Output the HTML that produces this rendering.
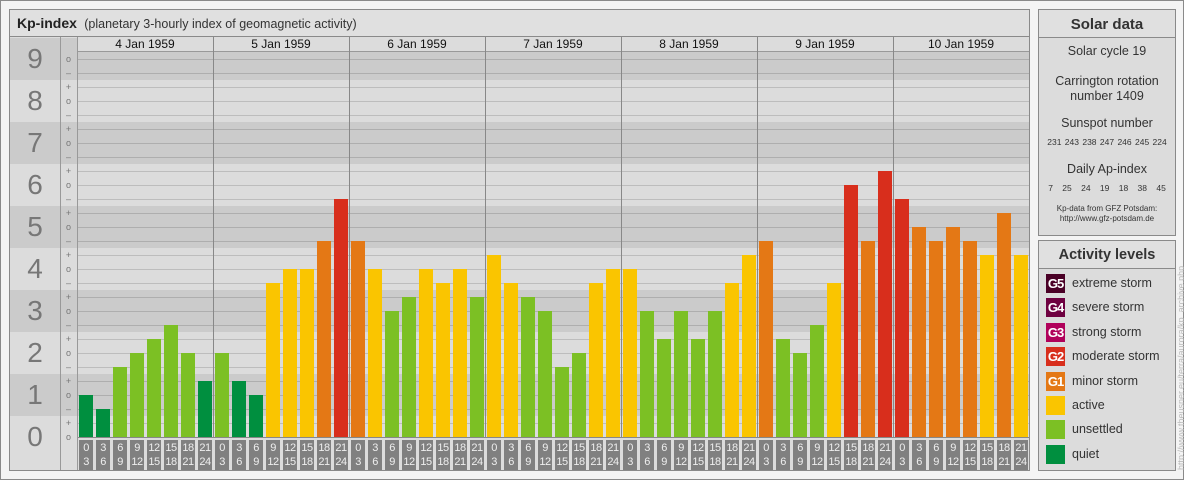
<!DOCTYPE html>
<html><head><meta charset="utf-8"><style>
*{margin:0;padding:0;box-sizing:border-box}
body{width:1184px;height:480px;position:relative;overflow:hidden;background:#f4f4f4;font-family:"Liberation Sans",sans-serif}
.a{position:absolute}
.p{position:absolute;border:1px solid #8a8a8a;background:#dcdcdc}
.b{position:absolute;width:14px;bottom:43px}
.q{background:#008f3f}.u{background:#7cc024}.y{background:#fac500}.m{background:#e47815}.g{background:#d82e1c}
.x{position:absolute;top:440px;width:14px;height:30px;background:#808080;color:#eee;font-size:11px;line-height:14px;text-align:center;padding-top:1px;letter-spacing:-0.5px}
.n{position:absolute;left:10px;width:50px;text-align:center;font-size:28px;color:#777;line-height:42px;height:42px}
.t{position:absolute;left:60px;width:17px;text-align:center;font-size:9px;color:#777;line-height:10px}
.d{position:absolute;top:37px;width:136px;text-align:center;font-size:12px;line-height:15px;color:#111}
.vl{position:absolute;top:37px;width:1px;height:401px;background:#888}
.sw{position:absolute;left:1046px;width:19px;height:19px;color:#fff;font-size:13px;font-weight:bold;line-height:19px;text-align:center;letter-spacing:-1px}
.lt{position:absolute;left:1072px;font-size:12.5px;color:#333;line-height:19px}
.c{position:absolute;left:1039px;width:136px;text-align:center;color:#333}
</style></head><body>
<div class="a" style="left:0;top:0;width:1184px;height:480px;border:1px solid #8a8a8a"></div>
<div class="p" style="left:9px;top:9px;width:1021px;height:462px"></div>
<div class="a" style="left:10px;top:10px;width:1019px;height:27px;background:#e0e0e0;border-bottom:1px solid #8a8a8a"></div>
<div class="a" style="left:17px;top:15px;font-size:14px;color:#222;line-height:16px"><b>Kp-index</b> <span style="font-size:12.5px;color:#333">&nbsp;(planetary 3-hourly index of geomagnetic activity)</span></div>

<div class="a" style="left:10px;top:37px;width:1019px;height:433px;background:#dcdcdc"></div>
<div class="a" style="left:10px;top:38px;width:67px;height:42px;background:#cbcbcb"></div>
<div class="a" style="left:10px;top:122px;width:67px;height:42px;background:#cbcbcb"></div>
<div class="a" style="left:10px;top:206px;width:67px;height:42px;background:#cbcbcb"></div>
<div class="a" style="left:10px;top:290px;width:67px;height:42px;background:#cbcbcb"></div>
<div class="a" style="left:10px;top:374px;width:67px;height:42px;background:#cbcbcb"></div>
<div class="a" style="left:77px;top:52px;width:952px;height:28px;background:#cbcbcb"></div>
<div class="a" style="left:77px;top:122px;width:952px;height:42px;background:#cbcbcb"></div>
<div class="a" style="left:77px;top:206px;width:952px;height:42px;background:#cbcbcb"></div>
<div class="a" style="left:77px;top:290px;width:952px;height:42px;background:#cbcbcb"></div>
<div class="a" style="left:77px;top:374px;width:952px;height:42px;background:#cbcbcb"></div>
<div class="a" style="left:77px;top:52px;width:952px;height:386px;background:repeating-linear-gradient(to top,rgba(0,0,0,0.14) 0,rgba(0,0,0,0.14) 1px,transparent 1px,transparent 14px)"></div>
<div class="a" style="left:77px;top:37px;width:952px;height:15px;background:#dcdcdc;border-bottom:1px solid #999"></div>
<div class="a" style="left:10px;top:437px;width:1019px;height:33px;background:#dcdcdc"></div>
<div class="a" style="left:77px;top:437px;width:952px;height:1px;background:#888"></div>
<div class="a" style="left:60px;top:37px;width:1px;height:433px;background:#999"></div>
<div class="a" style="left:77px;top:37px;width:1px;height:433px;background:#999"></div>

<div class="n" style="top:38px">9</div><div class="n" style="top:80px">8</div><div class="n" style="top:122px">7</div><div class="n" style="top:164px">6</div><div class="n" style="top:206px">5</div><div class="n" style="top:248px">4</div><div class="n" style="top:290px">3</div><div class="n" style="top:332px">2</div><div class="n" style="top:374px">1</div><div class="n" style="top:416px">0</div>

<div class="t" style="top:54px">o</div><div class="t" style="top:68px">–</div>
<div class="t" style="top:82px">+</div><div class="t" style="top:96px">o</div><div class="t" style="top:110px">–</div>
<div class="t" style="top:124px">+</div><div class="t" style="top:138px">o</div><div class="t" style="top:152px">–</div>
<div class="t" style="top:166px">+</div><div class="t" style="top:180px">o</div><div class="t" style="top:194px">–</div>
<div class="t" style="top:208px">+</div><div class="t" style="top:222px">o</div><div class="t" style="top:236px">–</div>
<div class="t" style="top:250px">+</div><div class="t" style="top:264px">o</div><div class="t" style="top:278px">–</div>
<div class="t" style="top:292px">+</div><div class="t" style="top:306px">o</div><div class="t" style="top:320px">–</div>
<div class="t" style="top:334px">+</div><div class="t" style="top:348px">o</div><div class="t" style="top:362px">–</div>
<div class="t" style="top:376px">+</div><div class="t" style="top:390px">o</div><div class="t" style="top:404px">–</div>
<div class="t" style="top:418px">+</div><div class="t" style="top:432px">o</div>

<div class="d" style="left:77px">4 Jan 1959</div><div class="d" style="left:213px">5 Jan 1959</div><div class="d" style="left:349px">6 Jan 1959</div><div class="d" style="left:485px">7 Jan 1959</div><div class="d" style="left:621px">8 Jan 1959</div><div class="d" style="left:757px">9 Jan 1959</div><div class="d" style="left:893px">10 Jan 1959</div>
<div class="vl" style="left:213px"></div><div class="vl" style="left:349px"></div><div class="vl" style="left:485px"></div><div class="vl" style="left:621px"></div><div class="vl" style="left:757px"></div><div class="vl" style="left:893px"></div>

<div class="b q" style="left:79px;height:42px"></div><div class="b q" style="left:96px;height:28px"></div><div class="b u" style="left:113px;height:70px"></div><div class="b u" style="left:130px;height:84px"></div><div class="b u" style="left:147px;height:98px"></div><div class="b u" style="left:164px;height:112px"></div><div class="b u" style="left:181px;height:84px"></div><div class="b q" style="left:198px;height:56px"></div>
<div class="b u" style="left:215px;height:84px"></div><div class="b q" style="left:232px;height:56px"></div><div class="b q" style="left:249px;height:42px"></div><div class="b y" style="left:266px;height:154px"></div><div class="b y" style="left:283px;height:168px"></div><div class="b y" style="left:300px;height:168px"></div><div class="b m" style="left:317px;height:196px"></div><div class="b g" style="left:334px;height:238px"></div>
<div class="b m" style="left:351px;height:196px"></div><div class="b y" style="left:368px;height:168px"></div><div class="b u" style="left:385px;height:126px"></div><div class="b u" style="left:402px;height:140px"></div><div class="b y" style="left:419px;height:168px"></div><div class="b y" style="left:436px;height:154px"></div><div class="b y" style="left:453px;height:168px"></div><div class="b u" style="left:470px;height:140px"></div>
<div class="b y" style="left:487px;height:182px"></div><div class="b y" style="left:504px;height:154px"></div><div class="b u" style="left:521px;height:140px"></div><div class="b u" style="left:538px;height:126px"></div><div class="b u" style="left:555px;height:70px"></div><div class="b u" style="left:572px;height:84px"></div><div class="b y" style="left:589px;height:154px"></div><div class="b y" style="left:606px;height:168px"></div>
<div class="b y" style="left:623px;height:168px"></div><div class="b u" style="left:640px;height:126px"></div><div class="b u" style="left:657px;height:98px"></div><div class="b u" style="left:674px;height:126px"></div><div class="b u" style="left:691px;height:98px"></div><div class="b u" style="left:708px;height:126px"></div><div class="b y" style="left:725px;height:154px"></div><div class="b y" style="left:742px;height:182px"></div>
<div class="b m" style="left:759px;height:196px"></div><div class="b u" style="left:776px;height:98px"></div><div class="b u" style="left:793px;height:84px"></div><div class="b u" style="left:810px;height:112px"></div><div class="b y" style="left:827px;height:154px"></div><div class="b g" style="left:844px;height:252px"></div><div class="b m" style="left:861px;height:196px"></div><div class="b g" style="left:878px;height:266px"></div>
<div class="b g" style="left:895px;height:238px"></div><div class="b m" style="left:912px;height:210px"></div><div class="b m" style="left:929px;height:196px"></div><div class="b m" style="left:946px;height:210px"></div><div class="b m" style="left:963px;height:196px"></div><div class="b y" style="left:980px;height:182px"></div><div class="b m" style="left:997px;height:224px"></div><div class="b y" style="left:1014px;height:182px"></div>

<div class="x" style="left:79px">0<br>3</div><div class="x" style="left:96px">3<br>6</div><div class="x" style="left:113px">6<br>9</div><div class="x" style="left:130px">9<br>12</div><div class="x" style="left:147px">12<br>15</div><div class="x" style="left:164px">15<br>18</div><div class="x" style="left:181px">18<br>21</div><div class="x" style="left:198px">21<br>24</div>
<div class="x" style="left:215px">0<br>3</div><div class="x" style="left:232px">3<br>6</div><div class="x" style="left:249px">6<br>9</div><div class="x" style="left:266px">9<br>12</div><div class="x" style="left:283px">12<br>15</div><div class="x" style="left:300px">15<br>18</div><div class="x" style="left:317px">18<br>21</div><div class="x" style="left:334px">21<br>24</div>
<div class="x" style="left:351px">0<br>3</div><div class="x" style="left:368px">3<br>6</div><div class="x" style="left:385px">6<br>9</div><div class="x" style="left:402px">9<br>12</div><div class="x" style="left:419px">12<br>15</div><div class="x" style="left:436px">15<br>18</div><div class="x" style="left:453px">18<br>21</div><div class="x" style="left:470px">21<br>24</div>
<div class="x" style="left:487px">0<br>3</div><div class="x" style="left:504px">3<br>6</div><div class="x" style="left:521px">6<br>9</div><div class="x" style="left:538px">9<br>12</div><div class="x" style="left:555px">12<br>15</div><div class="x" style="left:572px">15<br>18</div><div class="x" style="left:589px">18<br>21</div><div class="x" style="left:606px">21<br>24</div>
<div class="x" style="left:623px">0<br>3</div><div class="x" style="left:640px">3<br>6</div><div class="x" style="left:657px">6<br>9</div><div class="x" style="left:674px">9<br>12</div><div class="x" style="left:691px">12<br>15</div><div class="x" style="left:708px">15<br>18</div><div class="x" style="left:725px">18<br>21</div><div class="x" style="left:742px">21<br>24</div>
<div class="x" style="left:759px">0<br>3</div><div class="x" style="left:776px">3<br>6</div><div class="x" style="left:793px">6<br>9</div><div class="x" style="left:810px">9<br>12</div><div class="x" style="left:827px">12<br>15</div><div class="x" style="left:844px">15<br>18</div><div class="x" style="left:861px">18<br>21</div><div class="x" style="left:878px">21<br>24</div>
<div class="x" style="left:895px">0<br>3</div><div class="x" style="left:912px">3<br>6</div><div class="x" style="left:929px">6<br>9</div><div class="x" style="left:946px">9<br>12</div><div class="x" style="left:963px">12<br>15</div><div class="x" style="left:980px">15<br>18</div><div class="x" style="left:997px">18<br>21</div><div class="x" style="left:1014px">21<br>24</div>

<div class="p" style="left:1038px;top:9px;width:138px;height:227px"></div>
<div class="a" style="left:1039px;top:10px;width:136px;height:28px;background:#e0e0e0;border-bottom:1px solid #8a8a8a"></div>
<div class="c" style="top:16px;font-size:15px;font-weight:bold">Solar data</div>
<div class="c" style="top:44px;font-size:12.5px">Solar cycle 19</div>
<div class="c" style="top:74px;font-size:12.5px;line-height:15px">Carrington rotation<br>number 1409</div>
<div class="c" style="top:116px;font-size:12.5px">Sunspot number</div>
<div class="c" style="top:137px;font-size:8.5px;word-spacing:1px">231 243 238 247 246 245 224</div>
<div class="c" style="top:162px;font-size:12.5px">Daily Ap-index</div>
<div class="c" style="top:183px;font-size:8.5px;word-spacing:7px">7 25 24 19 18 38 45</div>
<div class="c" style="top:204px;font-size:8px;line-height:10px">Kp-data from GFZ Potsdam:<br>http://www.gfz-potsdam.de</div>

<div class="p" style="left:1038px;top:240px;width:138px;height:231px"></div>
<div class="a" style="left:1039px;top:241px;width:136px;height:28px;background:#e0e0e0;border-bottom:1px solid #8a8a8a"></div>
<div class="c" style="top:247px;font-size:14.5px;font-weight:bold">Activity levels</div>
<div class="sw" style="top:274px;background:#4a0026">G5</div><div class="lt" style="top:274px">extreme storm</div>
<div class="sw" style="top:298px;background:#6e0040">G4</div><div class="lt" style="top:298px">severe storm</div>
<div class="sw" style="top:323px;background:#b0005a">G3</div><div class="lt" style="top:323px">strong storm</div>
<div class="sw" style="top:347px;background:#d82e1c">G2</div><div class="lt" style="top:347px">moderate storm</div>
<div class="sw" style="top:372px;background:#e47815">G1</div><div class="lt" style="top:372px">minor storm</div>
<div class="sw" style="top:396px;background:#fac500"></div><div class="lt" style="top:396px">active</div>
<div class="sw" style="top:420px;background:#7cc024"></div><div class="lt" style="top:420px">unsettled</div>
<div class="sw" style="top:445px;background:#008f3f"></div><div class="lt" style="top:445px">quiet</div>

<div class="a" style="left:1176px;top:470px;transform:rotate(-90deg);transform-origin:0 0;font-size:9px;color:#bbb;white-space:nowrap;line-height:10px">http://www.theusner.eu/terra/aurora/kp_archive.php</div>
</body></html>
